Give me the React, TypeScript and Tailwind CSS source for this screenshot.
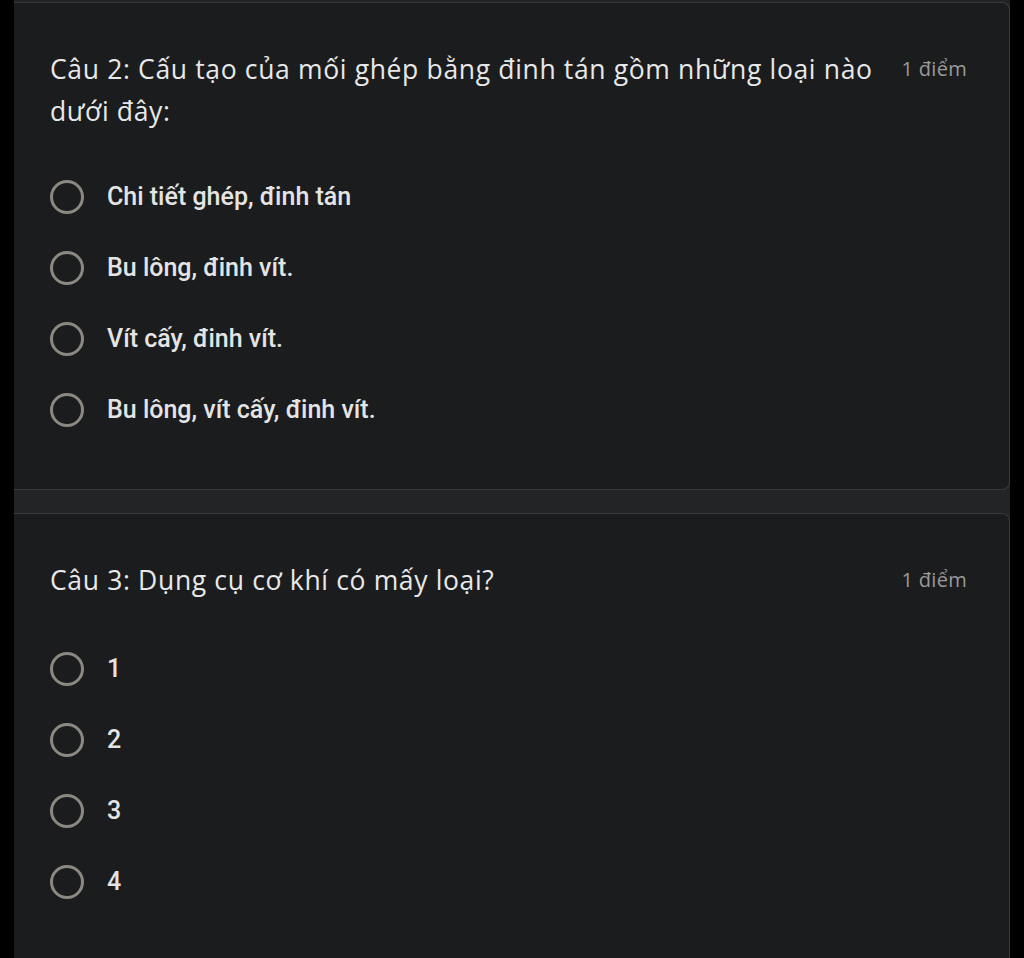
const questions = [
  {
    title: 'Câu 2: Cấu tạo của mối ghép bằng đinh tán gồm những loại nào dưới đây:',
    points: '1 điểm',
    options: ['Chi tiết ghép, đinh tán', 'Bu lông, đinh vít.', 'Vít cấy, đinh vít.', 'Bu lông, vít cấy, đinh vít.'],
  },
  {
    title: 'Câu 3: Dụng cụ cơ khí có mấy loại?',
    points: '1 điểm',
    options: ['1', '2', '3', '4'],
  },
];

function Radio() {
  return <span className="w-[34px] h-[34px] rounded-full border-[3px] border-[#8c8882] shrink-0" />;
}

function QuestionCard({ title, points, options, last }: { title: string; points: string; options: string[]; last?: boolean }) {
  return (
    <div
      className={`bg-[#1b1c1e] border border-l-0 border-[#3a3b3e] rounded-r-lg pl-[36px] pr-[42px] pt-[45px] ${
        last ? 'pb-[120px]' : 'pb-[44px]'
      }`}
    >
      <div className="flex items-start gap-4">
        <h2 className="flex-1 text-[26.5px] leading-[42px] text-[#e8e8e8] font-['Open_Sans',sans-serif] tracking-[0.65px]">
          {title}
        </h2>
        <span className="text-[20px] leading-[42px] text-[#9a9a9a] font-['Open_Sans',sans-serif] tracking-[0.3px] whitespace-nowrap">
          {points}
        </span>
      </div>
      <ul className={last ? 'mt-[32px]' : 'mt-[29px]'}>
        {options.map((o) => (
          <li key={o} className="h-[71px] flex items-center gap-[23px]">
            <Radio />
            <span className="text-[25px] font-medium text-[#e4e4e4] font-['Roboto',sans-serif]">{o}</span>
          </li>
        ))}
      </ul>
    </div>
  );
}

export default function App() {
  return (
    <div className="bg-black h-[958px] overflow-hidden pl-[14px] pr-[14px]">
      <div className="bg-[#232426] h-full pt-[2px] flex flex-col gap-[23px]">
        <QuestionCard {...questions[0]} />
        <QuestionCard {...questions[1]} last />
      </div>
    </div>
  );
}
